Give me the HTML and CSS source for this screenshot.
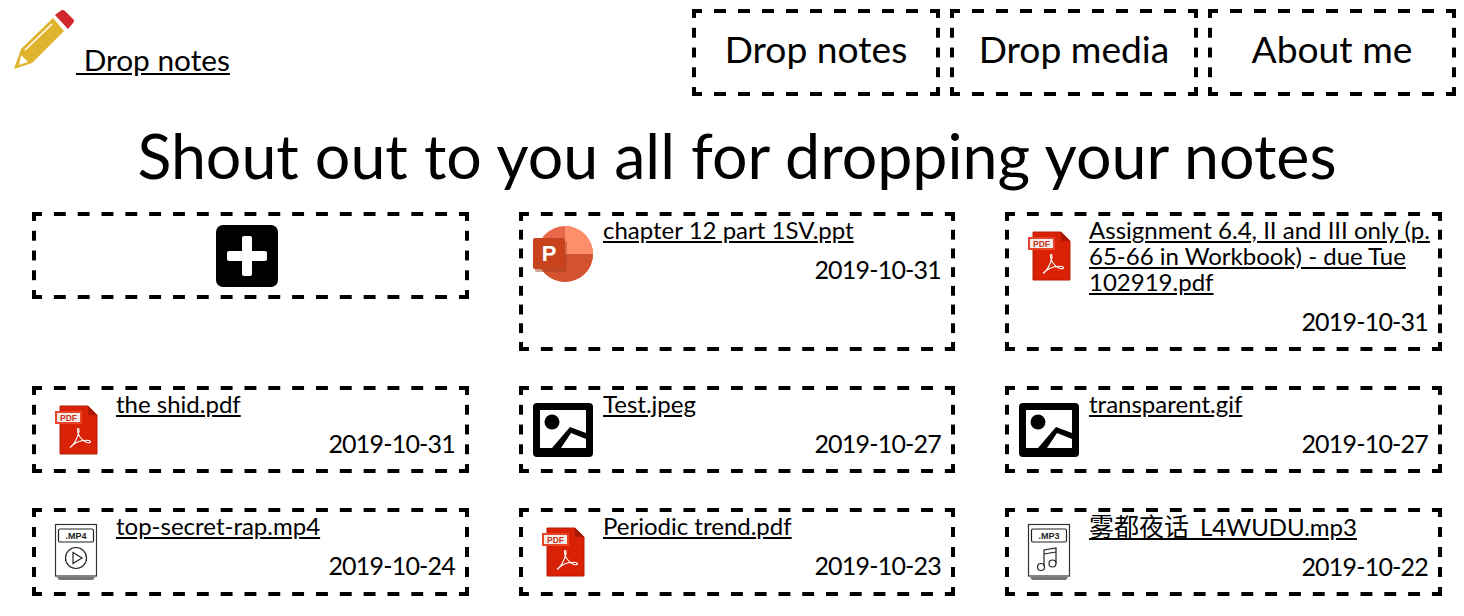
FILE: index.html
```html
<!DOCTYPE html>
<html lang="en">
<head>
<meta charset="utf-8">
<title>Drop notes</title>
<link rel="stylesheet" href="styles.css">
</head>
<body>
<svg class="defs" width="0" height="0" aria-hidden="true">
  <defs>
    <symbol id="pdf" viewBox="0 0 60 60">
      <path d="M14 6H42L51 15V54H14Z" fill="#d92106"/>
      <path d="M42 6V15H51Z" fill="#a81a05"/>
      <path d="M14 6H42L51 15V54H14Z" fill="none" stroke="#b81c05" stroke-width="1"/>
      <rect x="9" y="11" width="27" height="13" fill="#e8442a"/>
      <rect x="11" y="13" width="23" height="9" fill="#f4ece8"/>
      <text x="22.500" y="20.800" class="pdf-label">PDF</text>
      <path d="M24 47.500C27 45.500 31 39.500 33 31.500C33.500 28.500 32 27.500 31.500 29.500C31 33.500 35 40.500 41 42.500C44 43.500 46 41.500 43 40.500C37 39.500 30 41.500 24 47.500Z" fill="none" stroke="#fff" stroke-width="1.100"/>
    </symbol>
    <symbol id="img" viewBox="0 0 60 60">
      <rect y="3" width="60" height="54" rx="4"/>
      <rect x="7" y="10" width="46" height="38" fill="#fff"/>
      <circle cx="19" cy="22" r="7.500"/>
      <path d="M19 48L37 27L53 33V39L38 33L28 48Z"/>
    </symbol>
  </defs>
</svg>

<header class="top">
  <a class="brand" href="#"><svg class="pencil" viewBox="0 0 62 62" aria-hidden="true">
      <path d="M0 59L7 39L39 8L50 21L18 53Z" fill="#dfb32c"/>
      <path d="M7 45L14 52L5 55Z" fill="#fff"/>
      <path d="M11 40L38 14" stroke="#fff" stroke-width="1.600"/>
      <path d="M41 5L47 0.500Q49-.5 51 1L59 9Q61 11 59 13L54 19Z" fill="#d2262c"/>
    </svg> Drop notes</a>
  <nav class="nav">
    <a class="dash nav-link" href="#">Drop notes</a>
    <a class="dash nav-link" href="#">Drop media</a>
    <a class="dash nav-link" href="#">About me</a>
  </nav>
</header>

<h1 class="title">Shout out to you all for dropping your notes</h1>

<main class="grid">
  <div class="cell">
    <a class="dash add" href="#">
      <svg class="plus" viewBox="0 0 62 62" aria-hidden="true">
        <rect width="62" height="62" rx="7"/>
        <rect x="11" y="26" width="40" height="10" rx="2" fill="#fff"/>
        <rect x="26" y="11" width="10" height="40" rx="2" fill="#fff"/>
      </svg>
    </a>
  </div>

  <article class="dash card">
    <svg class="icon" viewBox="0 0 60 60" aria-hidden="true">
      <circle cx="32" cy="28" r="28" fill="#e8694a"/>
      <path d="M32 0A28 28 0 0 1 60 28H32Z" fill="#ff8f6b"/>
      <path d="M60 28A28 28 0 0 1 4 28Z" fill="#d35230"/>
      <rect x="2" y="15" width="32" height="31" rx="2" fill="#a33f20" opacity=".5"/>
      <rect y="12" width="32" height="31" rx="2" fill="#c8421e"/>
      <text x="16" y="35" class="ppt-label">P</text>
    </svg>
    <div class="body"><a class="name" href="#">chapter 12 part 1SV.ppt</a><p class="date">2019-10-31</p></div>
  </article>

  <article class="dash card">
    <svg class="icon"><use href="#pdf"/></svg>
    <div class="body"><a class="name" href="#">Assignment 6.4, II and III only (p. 65-66 in Workbook) - due Tue 102919.pdf</a><p class="date">2019-10-31</p></div>
  </article>

  <article class="dash card">
    <svg class="icon"><use href="#pdf"/></svg>
    <div class="body"><a class="name" href="#">the shid.pdf</a><p class="date">2019-10-31</p></div>
  </article>

  <article class="dash card">
    <svg class="icon"><use href="#img"/></svg>
    <div class="body"><a class="name" href="#">Test.jpeg</a><p class="date">2019-10-27</p></div>
  </article>

  <article class="dash card">
    <svg class="icon"><use href="#img"/></svg>
    <div class="body"><a class="name" href="#">transparent.gif</a><p class="date">2019-10-27</p></div>
  </article>

  <article class="dash card">
    <svg class="icon" viewBox="0 0 60 60" aria-hidden="true">
      <path d="M11 55H49L47 58H13Z" fill="#777"/>
      <rect x="9.500" y="2.500" width="41" height="51.500" fill="#fff" stroke="#333" stroke-width="1.200"/>
      <rect x="12.500" y="7" width="35" height="13" rx="1.500" fill="#fff" stroke="#222" stroke-width="1.200"/>
      <text x="30" y="17" class="media-label">.MP4</text>
      <circle cx="30" cy="36" r="10.500" fill="none" stroke="#222" stroke-width="1.200"/>
      <path d="M27 30.500L36 36L27 41.500Z" fill="none" stroke="#222" stroke-width="1.200"/>
    </svg>
    <div class="body"><a class="name" href="#">top-secret-rap.mp4</a><p class="date">2019-10-24</p></div>
  </article>

  <article class="dash card">
    <svg class="icon"><use href="#pdf"/></svg>
    <div class="body"><a class="name" href="#">Periodic trend.pdf</a><p class="date">2019-10-23</p></div>
  </article>

  <article class="dash card">
    <svg class="icon" viewBox="0 0 60 60" aria-hidden="true">
      <path d="M11 55H49L47 58H13Z" fill="#777"/>
      <rect x="9.500" y="2.500" width="41" height="51.500" fill="#fff" stroke="#333" stroke-width="1.200"/>
      <rect x="12.500" y="7" width="35" height="13" rx="1.500" fill="#fff" stroke="#222" stroke-width="1.200"/>
      <text x="30" y="17" class="media-label">.MP3</text>
      <path d="M25 44V28L37 26V41M25 32L37 30" fill="none" stroke="#222" stroke-width="1.200"/>
      <circle cx="22" cy="45" r="3.500" fill="none" stroke="#222" stroke-width="1.200"/>
      <circle cx="33.500" cy="41.500" r="3.500" fill="none" stroke="#222" stroke-width="1.200"/>
    </svg>
    <div class="body"><a class="name" href="#"><span class="cjk">雾都夜话</span>_L4WUDU.mp3</a><p class="date">2019-10-22</p></div>
  </article>
</main>
</body>
</html>
```
FILE: styles.css
```css
* { box-sizing: border-box; }

html, body { margin: 0; padding: 0; }

body {
  font-family: "Lato", "Noto Sans CJK SC", sans-serif;
  color: #000;
  background: #fff;
  overflow: hidden;
}

a { color: #000; }

.defs { position: absolute; }

.pdf-label {
  font: 700 8.500px "Liberation Sans", sans-serif;
  fill: #c8341c;
  text-anchor: middle;
}

.ppt-label {
  font: 700 22px "Liberation Sans", sans-serif;
  fill: #fff;
  text-anchor: middle;
}

.media-label {
  font: 700 9px "Liberation Sans", sans-serif;
  fill: #222;
  text-anchor: middle;
}

/* 12px dashes, 12px gaps, fitted to each box the way a browser fits a dashed border */
.dash {
  border: 4px solid transparent;
  background-image:
    linear-gradient(90deg, #000 25%, transparent 25% 75%, #000 75%),
    linear-gradient(90deg, #000 25%, transparent 25% 75%, #000 75%),
    linear-gradient(180deg, #000 25%, transparent 25% 75%, #000 75%),
    linear-gradient(180deg, #000 25%, transparent 25% 75%, #000 75%);
  background-size: 24px 4px, 24px 4px, 4px 20px, 4px 20px;
  background-repeat: round no-repeat, round no-repeat, no-repeat round, no-repeat round;
  background-position: 0 -4px, 0 calc(100% + 4px), -4px 0, calc(100% + 4px) 0;
}

.top {
  display: flex;
  justify-content: space-between;
  align-items: flex-start;
  padding: 9px 8px 0 14px;
}

.brand {
  display: block;
  padding-top: 1px;
  font-size: 29.800px;
  line-height: 62px;
  white-space: pre;
}

.pencil {
  width: 62px;
  height: 62px;
  vertical-align: -1px;
}

.nav {
  display: flex;
  gap: 10px;
}

.nav-link {
  display: flex;
  align-items: center;
  justify-content: center;
  width: 248px;
  height: 87px;
  padding-bottom: 8px;
  font-size: 37.200px;
  text-decoration: none;
}

.title {
  margin: 0;
  padding-left: 10px;
  height: 116px;
  display: flex;
  align-items: center;
  justify-content: center;
  font-size: 62.700px;
  font-weight: 400;
}

.grid {
  display: grid;
  grid-template-columns: 437px 436px 437px;
  column-gap: 50px;
  row-gap: 35px;
  padding-left: 32px;
}

.cell { display: block; }

.add {
  display: flex;
  justify-content: center;
  padding: 9px 8px 8px 0;
  height: 87px;
}

.plus {
  width: 62px;
  height: 62px;
  fill: #000;
}

.card {
  display: flex;
  gap: 10px;
  padding: 1px 10px 0 10px;
}

.icon {
  flex: none;
  width: 60px;
  height: 60px;
  margin-top: 9px;
  fill: #000;
}

.body {
  flex: 1;
  min-width: 0;
}

.name {
  display: block;
  margin-right: -7px;
  font-size: 24px;
  line-height: 26px;
}

.cjk { font-size: 25px; }

.date {
  margin: 13px 0 13px;
  font-size: 25px;
  line-height: 26px;
  letter-spacing: -0.800px;
  text-align: right;
}
```
